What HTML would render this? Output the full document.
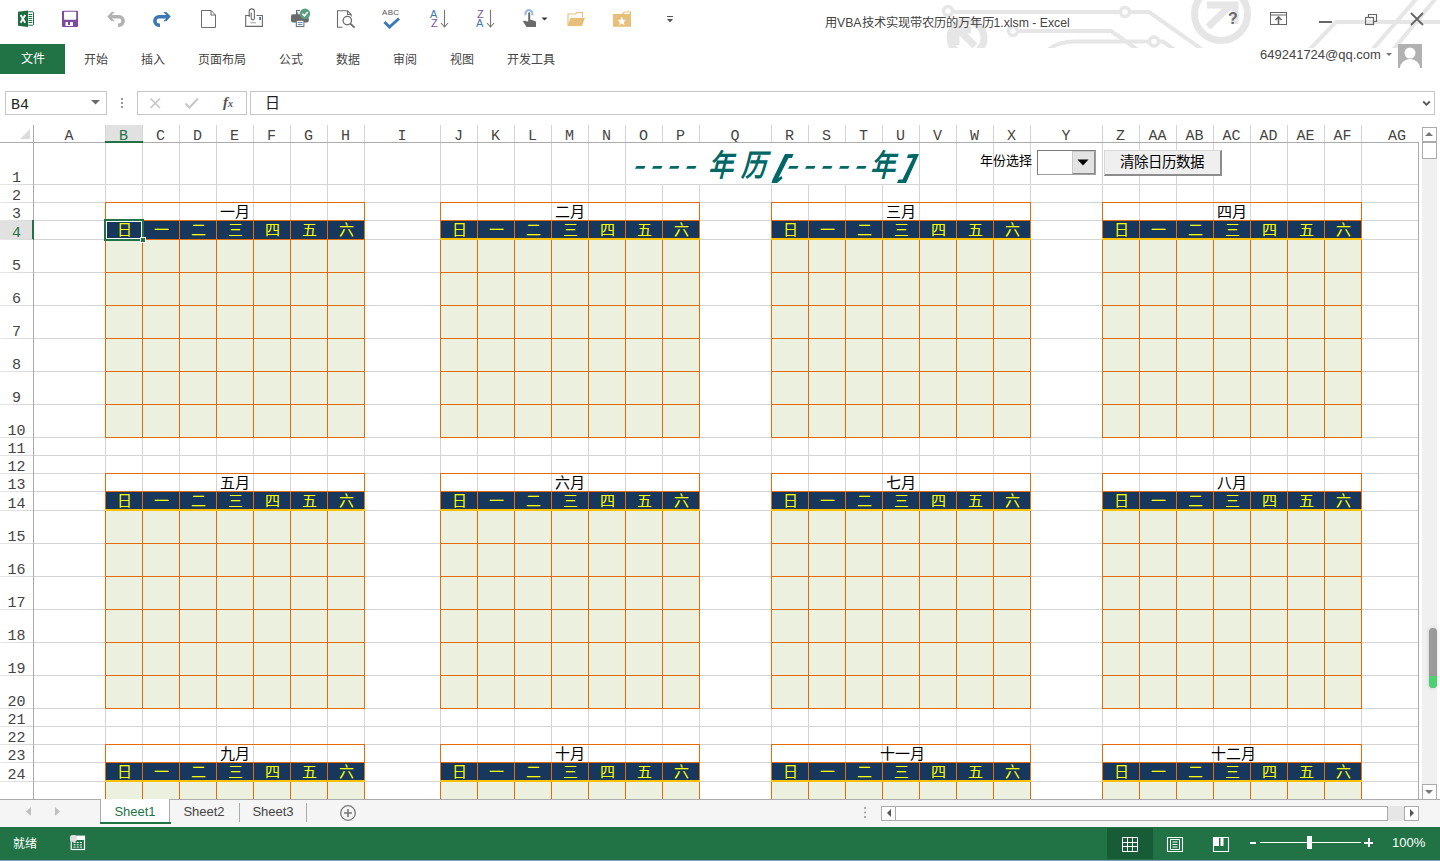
<!DOCTYPE html><html lang="zh-CN"><head><meta charset="utf-8"><title>Excel</title><style>
html,body{margin:0;padding:0;width:1440px;height:861px;overflow:hidden;background:#fff;position:relative;font-family:'Liberation Sans', sans-serif;}
div{box-sizing:border-box;}
</style></head><body>
<div style="position:absolute;left:105px;top:142px;width:1px;height:657px;background:#d4d4d4"></div>
<div style="position:absolute;left:142px;top:142px;width:1px;height:657px;background:#d4d4d4"></div>
<div style="position:absolute;left:179px;top:142px;width:1px;height:657px;background:#d4d4d4"></div>
<div style="position:absolute;left:216px;top:142px;width:1px;height:657px;background:#d4d4d4"></div>
<div style="position:absolute;left:253px;top:142px;width:1px;height:657px;background:#d4d4d4"></div>
<div style="position:absolute;left:290px;top:142px;width:1px;height:657px;background:#d4d4d4"></div>
<div style="position:absolute;left:327px;top:142px;width:1px;height:657px;background:#d4d4d4"></div>
<div style="position:absolute;left:364px;top:142px;width:1px;height:657px;background:#d4d4d4"></div>
<div style="position:absolute;left:440px;top:142px;width:1px;height:657px;background:#d4d4d4"></div>
<div style="position:absolute;left:477px;top:142px;width:1px;height:657px;background:#d4d4d4"></div>
<div style="position:absolute;left:514px;top:142px;width:1px;height:657px;background:#d4d4d4"></div>
<div style="position:absolute;left:551px;top:142px;width:1px;height:657px;background:#d4d4d4"></div>
<div style="position:absolute;left:588px;top:142px;width:1px;height:657px;background:#d4d4d4"></div>
<div style="position:absolute;left:625px;top:142px;width:1px;height:657px;background:#d4d4d4"></div>
<div style="position:absolute;left:662px;top:142px;width:1px;height:657px;background:#d4d4d4"></div>
<div style="position:absolute;left:699px;top:142px;width:1px;height:657px;background:#d4d4d4"></div>
<div style="position:absolute;left:771px;top:142px;width:1px;height:657px;background:#d4d4d4"></div>
<div style="position:absolute;left:808px;top:142px;width:1px;height:657px;background:#d4d4d4"></div>
<div style="position:absolute;left:845px;top:142px;width:1px;height:657px;background:#d4d4d4"></div>
<div style="position:absolute;left:882px;top:142px;width:1px;height:657px;background:#d4d4d4"></div>
<div style="position:absolute;left:919px;top:142px;width:1px;height:657px;background:#d4d4d4"></div>
<div style="position:absolute;left:956px;top:142px;width:1px;height:657px;background:#d4d4d4"></div>
<div style="position:absolute;left:993px;top:142px;width:1px;height:657px;background:#d4d4d4"></div>
<div style="position:absolute;left:1030px;top:142px;width:1px;height:657px;background:#d4d4d4"></div>
<div style="position:absolute;left:1102px;top:142px;width:1px;height:657px;background:#d4d4d4"></div>
<div style="position:absolute;left:1139px;top:142px;width:1px;height:657px;background:#d4d4d4"></div>
<div style="position:absolute;left:1176px;top:142px;width:1px;height:657px;background:#d4d4d4"></div>
<div style="position:absolute;left:1213px;top:142px;width:1px;height:657px;background:#d4d4d4"></div>
<div style="position:absolute;left:1250px;top:142px;width:1px;height:657px;background:#d4d4d4"></div>
<div style="position:absolute;left:1287px;top:142px;width:1px;height:657px;background:#d4d4d4"></div>
<div style="position:absolute;left:1324px;top:142px;width:1px;height:657px;background:#d4d4d4"></div>
<div style="position:absolute;left:1361px;top:142px;width:1px;height:657px;background:#d4d4d4"></div>
<div style="position:absolute;left:33px;top:184px;width:1385px;height:1px;background:#d4d4d4"></div>
<div style="position:absolute;left:33px;top:202px;width:1385px;height:1px;background:#d4d4d4"></div>
<div style="position:absolute;left:33px;top:220px;width:1385px;height:1px;background:#d4d4d4"></div>
<div style="position:absolute;left:33px;top:239px;width:1385px;height:1px;background:#d4d4d4"></div>
<div style="position:absolute;left:33px;top:272px;width:1385px;height:1px;background:#d4d4d4"></div>
<div style="position:absolute;left:33px;top:305px;width:1385px;height:1px;background:#d4d4d4"></div>
<div style="position:absolute;left:33px;top:338px;width:1385px;height:1px;background:#d4d4d4"></div>
<div style="position:absolute;left:33px;top:371px;width:1385px;height:1px;background:#d4d4d4"></div>
<div style="position:absolute;left:33px;top:404px;width:1385px;height:1px;background:#d4d4d4"></div>
<div style="position:absolute;left:33px;top:437px;width:1385px;height:1px;background:#d4d4d4"></div>
<div style="position:absolute;left:33px;top:455px;width:1385px;height:1px;background:#d4d4d4"></div>
<div style="position:absolute;left:33px;top:473px;width:1385px;height:1px;background:#d4d4d4"></div>
<div style="position:absolute;left:33px;top:491px;width:1385px;height:1px;background:#d4d4d4"></div>
<div style="position:absolute;left:33px;top:510px;width:1385px;height:1px;background:#d4d4d4"></div>
<div style="position:absolute;left:33px;top:543px;width:1385px;height:1px;background:#d4d4d4"></div>
<div style="position:absolute;left:33px;top:576px;width:1385px;height:1px;background:#d4d4d4"></div>
<div style="position:absolute;left:33px;top:609px;width:1385px;height:1px;background:#d4d4d4"></div>
<div style="position:absolute;left:33px;top:642px;width:1385px;height:1px;background:#d4d4d4"></div>
<div style="position:absolute;left:33px;top:675px;width:1385px;height:1px;background:#d4d4d4"></div>
<div style="position:absolute;left:33px;top:708px;width:1385px;height:1px;background:#d4d4d4"></div>
<div style="position:absolute;left:33px;top:726px;width:1385px;height:1px;background:#d4d4d4"></div>
<div style="position:absolute;left:33px;top:744px;width:1385px;height:1px;background:#d4d4d4"></div>
<div style="position:absolute;left:33px;top:762px;width:1385px;height:1px;background:#d4d4d4"></div>
<div style="position:absolute;left:33px;top:781px;width:1385px;height:1px;background:#d4d4d4"></div>
<div style="position:absolute;left:626px;top:143px;width:293px;height:41px;background:#fff"></div>
<div style="position:absolute;left:105px;top:239px;width:259px;height:198px;background:#ebf1de"></div>
<div style="position:absolute;left:105px;top:220px;width:259px;height:19px;background:#17375d"></div>
<div style="position:absolute;left:105px;top:220px;width:1px;height:217px;background:#e26b0a"></div>
<div style="position:absolute;left:142px;top:220px;width:1px;height:217px;background:#e26b0a"></div>
<div style="position:absolute;left:179px;top:220px;width:1px;height:217px;background:#e26b0a"></div>
<div style="position:absolute;left:216px;top:220px;width:1px;height:217px;background:#e26b0a"></div>
<div style="position:absolute;left:253px;top:220px;width:1px;height:217px;background:#e26b0a"></div>
<div style="position:absolute;left:290px;top:220px;width:1px;height:217px;background:#e26b0a"></div>
<div style="position:absolute;left:327px;top:220px;width:1px;height:217px;background:#e26b0a"></div>
<div style="position:absolute;left:364px;top:220px;width:1px;height:217px;background:#e26b0a"></div>
<div style="position:absolute;left:105px;top:202px;width:1px;height:18px;background:#e26b0a"></div>
<div style="position:absolute;left:364px;top:202px;width:1px;height:18px;background:#e26b0a"></div>
<div style="position:absolute;left:105px;top:202px;width:260px;height:1px;background:#e26b0a"></div>
<div style="position:absolute;left:105px;top:220px;width:260px;height:1px;background:#e26b0a"></div>
<div style="position:absolute;left:105px;top:272px;width:260px;height:1px;background:#e26b0a"></div>
<div style="position:absolute;left:105px;top:305px;width:260px;height:1px;background:#e26b0a"></div>
<div style="position:absolute;left:105px;top:338px;width:260px;height:1px;background:#e26b0a"></div>
<div style="position:absolute;left:105px;top:371px;width:260px;height:1px;background:#e26b0a"></div>
<div style="position:absolute;left:105px;top:404px;width:260px;height:1px;background:#e26b0a"></div>
<div style="position:absolute;left:105px;top:437px;width:260px;height:1px;background:#e26b0a"></div>
<div style="position:absolute;left:105px;top:239px;width:260px;height:1px;background:#e26b0a"></div>
<div style="position:absolute;left:105px;top:203px;white-space:nowrap;width:259px;text-align:center;font-size:15px;line-height:18px;color:#000;font-weight:300">一月</div>
<div style="position:absolute;left:106px;top:221px;white-space:nowrap;width:36px;text-align:center;font-size:15px;line-height:18px;color:#ff0;font-weight:300">日</div>
<div style="position:absolute;left:143px;top:221px;white-space:nowrap;width:36px;text-align:center;font-size:15px;line-height:18px;color:#ff0;font-weight:300">一</div>
<div style="position:absolute;left:180px;top:221px;white-space:nowrap;width:36px;text-align:center;font-size:15px;line-height:18px;color:#ff0;font-weight:300">二</div>
<div style="position:absolute;left:217px;top:221px;white-space:nowrap;width:36px;text-align:center;font-size:15px;line-height:18px;color:#ff0;font-weight:300">三</div>
<div style="position:absolute;left:254px;top:221px;white-space:nowrap;width:36px;text-align:center;font-size:15px;line-height:18px;color:#ff0;font-weight:300">四</div>
<div style="position:absolute;left:291px;top:221px;white-space:nowrap;width:36px;text-align:center;font-size:15px;line-height:18px;color:#ff0;font-weight:300">五</div>
<div style="position:absolute;left:328px;top:221px;white-space:nowrap;width:36px;text-align:center;font-size:15px;line-height:18px;color:#ff0;font-weight:300">六</div>
<div style="position:absolute;left:440px;top:239px;width:259px;height:198px;background:#ebf1de"></div>
<div style="position:absolute;left:440px;top:220px;width:259px;height:19px;background:#17375d"></div>
<div style="position:absolute;left:440px;top:220px;width:1px;height:217px;background:#e26b0a"></div>
<div style="position:absolute;left:477px;top:220px;width:1px;height:217px;background:#e26b0a"></div>
<div style="position:absolute;left:514px;top:220px;width:1px;height:217px;background:#e26b0a"></div>
<div style="position:absolute;left:551px;top:220px;width:1px;height:217px;background:#e26b0a"></div>
<div style="position:absolute;left:588px;top:220px;width:1px;height:217px;background:#e26b0a"></div>
<div style="position:absolute;left:625px;top:220px;width:1px;height:217px;background:#e26b0a"></div>
<div style="position:absolute;left:662px;top:220px;width:1px;height:217px;background:#e26b0a"></div>
<div style="position:absolute;left:699px;top:220px;width:1px;height:217px;background:#e26b0a"></div>
<div style="position:absolute;left:440px;top:202px;width:1px;height:18px;background:#e26b0a"></div>
<div style="position:absolute;left:699px;top:202px;width:1px;height:18px;background:#e26b0a"></div>
<div style="position:absolute;left:440px;top:202px;width:260px;height:1px;background:#e26b0a"></div>
<div style="position:absolute;left:440px;top:220px;width:260px;height:1px;background:#e26b0a"></div>
<div style="position:absolute;left:440px;top:272px;width:260px;height:1px;background:#e26b0a"></div>
<div style="position:absolute;left:440px;top:305px;width:260px;height:1px;background:#e26b0a"></div>
<div style="position:absolute;left:440px;top:338px;width:260px;height:1px;background:#e26b0a"></div>
<div style="position:absolute;left:440px;top:371px;width:260px;height:1px;background:#e26b0a"></div>
<div style="position:absolute;left:440px;top:404px;width:260px;height:1px;background:#e26b0a"></div>
<div style="position:absolute;left:440px;top:437px;width:260px;height:1px;background:#e26b0a"></div>
<div style="position:absolute;left:440px;top:238px;width:260px;height:2px;background:#ffc000"></div>
<div style="position:absolute;left:440px;top:203px;white-space:nowrap;width:259px;text-align:center;font-size:15px;line-height:18px;color:#000;font-weight:300">二月</div>
<div style="position:absolute;left:441px;top:221px;white-space:nowrap;width:36px;text-align:center;font-size:15px;line-height:18px;color:#ff0;font-weight:300">日</div>
<div style="position:absolute;left:478px;top:221px;white-space:nowrap;width:36px;text-align:center;font-size:15px;line-height:18px;color:#ff0;font-weight:300">一</div>
<div style="position:absolute;left:515px;top:221px;white-space:nowrap;width:36px;text-align:center;font-size:15px;line-height:18px;color:#ff0;font-weight:300">二</div>
<div style="position:absolute;left:552px;top:221px;white-space:nowrap;width:36px;text-align:center;font-size:15px;line-height:18px;color:#ff0;font-weight:300">三</div>
<div style="position:absolute;left:589px;top:221px;white-space:nowrap;width:36px;text-align:center;font-size:15px;line-height:18px;color:#ff0;font-weight:300">四</div>
<div style="position:absolute;left:626px;top:221px;white-space:nowrap;width:36px;text-align:center;font-size:15px;line-height:18px;color:#ff0;font-weight:300">五</div>
<div style="position:absolute;left:663px;top:221px;white-space:nowrap;width:36px;text-align:center;font-size:15px;line-height:18px;color:#ff0;font-weight:300">六</div>
<div style="position:absolute;left:771px;top:239px;width:259px;height:198px;background:#ebf1de"></div>
<div style="position:absolute;left:771px;top:220px;width:259px;height:19px;background:#17375d"></div>
<div style="position:absolute;left:771px;top:220px;width:1px;height:217px;background:#e26b0a"></div>
<div style="position:absolute;left:808px;top:220px;width:1px;height:217px;background:#e26b0a"></div>
<div style="position:absolute;left:845px;top:220px;width:1px;height:217px;background:#e26b0a"></div>
<div style="position:absolute;left:882px;top:220px;width:1px;height:217px;background:#e26b0a"></div>
<div style="position:absolute;left:919px;top:220px;width:1px;height:217px;background:#e26b0a"></div>
<div style="position:absolute;left:956px;top:220px;width:1px;height:217px;background:#e26b0a"></div>
<div style="position:absolute;left:993px;top:220px;width:1px;height:217px;background:#e26b0a"></div>
<div style="position:absolute;left:1030px;top:220px;width:1px;height:217px;background:#e26b0a"></div>
<div style="position:absolute;left:771px;top:202px;width:1px;height:18px;background:#e26b0a"></div>
<div style="position:absolute;left:1030px;top:202px;width:1px;height:18px;background:#e26b0a"></div>
<div style="position:absolute;left:771px;top:202px;width:260px;height:1px;background:#e26b0a"></div>
<div style="position:absolute;left:771px;top:220px;width:260px;height:1px;background:#e26b0a"></div>
<div style="position:absolute;left:771px;top:272px;width:260px;height:1px;background:#e26b0a"></div>
<div style="position:absolute;left:771px;top:305px;width:260px;height:1px;background:#e26b0a"></div>
<div style="position:absolute;left:771px;top:338px;width:260px;height:1px;background:#e26b0a"></div>
<div style="position:absolute;left:771px;top:371px;width:260px;height:1px;background:#e26b0a"></div>
<div style="position:absolute;left:771px;top:404px;width:260px;height:1px;background:#e26b0a"></div>
<div style="position:absolute;left:771px;top:437px;width:260px;height:1px;background:#e26b0a"></div>
<div style="position:absolute;left:771px;top:238px;width:260px;height:2px;background:#ffc000"></div>
<div style="position:absolute;left:771px;top:203px;white-space:nowrap;width:259px;text-align:center;font-size:15px;line-height:18px;color:#000;font-weight:300">三月</div>
<div style="position:absolute;left:772px;top:221px;white-space:nowrap;width:36px;text-align:center;font-size:15px;line-height:18px;color:#ff0;font-weight:300">日</div>
<div style="position:absolute;left:809px;top:221px;white-space:nowrap;width:36px;text-align:center;font-size:15px;line-height:18px;color:#ff0;font-weight:300">一</div>
<div style="position:absolute;left:846px;top:221px;white-space:nowrap;width:36px;text-align:center;font-size:15px;line-height:18px;color:#ff0;font-weight:300">二</div>
<div style="position:absolute;left:883px;top:221px;white-space:nowrap;width:36px;text-align:center;font-size:15px;line-height:18px;color:#ff0;font-weight:300">三</div>
<div style="position:absolute;left:920px;top:221px;white-space:nowrap;width:36px;text-align:center;font-size:15px;line-height:18px;color:#ff0;font-weight:300">四</div>
<div style="position:absolute;left:957px;top:221px;white-space:nowrap;width:36px;text-align:center;font-size:15px;line-height:18px;color:#ff0;font-weight:300">五</div>
<div style="position:absolute;left:994px;top:221px;white-space:nowrap;width:36px;text-align:center;font-size:15px;line-height:18px;color:#ff0;font-weight:300">六</div>
<div style="position:absolute;left:1102px;top:239px;width:259px;height:198px;background:#ebf1de"></div>
<div style="position:absolute;left:1102px;top:220px;width:259px;height:19px;background:#17375d"></div>
<div style="position:absolute;left:1102px;top:220px;width:1px;height:217px;background:#e26b0a"></div>
<div style="position:absolute;left:1139px;top:220px;width:1px;height:217px;background:#e26b0a"></div>
<div style="position:absolute;left:1176px;top:220px;width:1px;height:217px;background:#e26b0a"></div>
<div style="position:absolute;left:1213px;top:220px;width:1px;height:217px;background:#e26b0a"></div>
<div style="position:absolute;left:1250px;top:220px;width:1px;height:217px;background:#e26b0a"></div>
<div style="position:absolute;left:1287px;top:220px;width:1px;height:217px;background:#e26b0a"></div>
<div style="position:absolute;left:1324px;top:220px;width:1px;height:217px;background:#e26b0a"></div>
<div style="position:absolute;left:1361px;top:220px;width:1px;height:217px;background:#e26b0a"></div>
<div style="position:absolute;left:1102px;top:202px;width:1px;height:18px;background:#e26b0a"></div>
<div style="position:absolute;left:1361px;top:202px;width:1px;height:18px;background:#e26b0a"></div>
<div style="position:absolute;left:1102px;top:202px;width:260px;height:1px;background:#e26b0a"></div>
<div style="position:absolute;left:1102px;top:220px;width:260px;height:1px;background:#e26b0a"></div>
<div style="position:absolute;left:1102px;top:272px;width:260px;height:1px;background:#e26b0a"></div>
<div style="position:absolute;left:1102px;top:305px;width:260px;height:1px;background:#e26b0a"></div>
<div style="position:absolute;left:1102px;top:338px;width:260px;height:1px;background:#e26b0a"></div>
<div style="position:absolute;left:1102px;top:371px;width:260px;height:1px;background:#e26b0a"></div>
<div style="position:absolute;left:1102px;top:404px;width:260px;height:1px;background:#e26b0a"></div>
<div style="position:absolute;left:1102px;top:437px;width:260px;height:1px;background:#e26b0a"></div>
<div style="position:absolute;left:1102px;top:238px;width:260px;height:2px;background:#ffc000"></div>
<div style="position:absolute;left:1102px;top:203px;white-space:nowrap;width:259px;text-align:center;font-size:15px;line-height:18px;color:#000;font-weight:300">四月</div>
<div style="position:absolute;left:1103px;top:221px;white-space:nowrap;width:36px;text-align:center;font-size:15px;line-height:18px;color:#ff0;font-weight:300">日</div>
<div style="position:absolute;left:1140px;top:221px;white-space:nowrap;width:36px;text-align:center;font-size:15px;line-height:18px;color:#ff0;font-weight:300">一</div>
<div style="position:absolute;left:1177px;top:221px;white-space:nowrap;width:36px;text-align:center;font-size:15px;line-height:18px;color:#ff0;font-weight:300">二</div>
<div style="position:absolute;left:1214px;top:221px;white-space:nowrap;width:36px;text-align:center;font-size:15px;line-height:18px;color:#ff0;font-weight:300">三</div>
<div style="position:absolute;left:1251px;top:221px;white-space:nowrap;width:36px;text-align:center;font-size:15px;line-height:18px;color:#ff0;font-weight:300">四</div>
<div style="position:absolute;left:1288px;top:221px;white-space:nowrap;width:36px;text-align:center;font-size:15px;line-height:18px;color:#ff0;font-weight:300">五</div>
<div style="position:absolute;left:1325px;top:221px;white-space:nowrap;width:36px;text-align:center;font-size:15px;line-height:18px;color:#ff0;font-weight:300">六</div>
<div style="position:absolute;left:105px;top:510px;width:259px;height:198px;background:#ebf1de"></div>
<div style="position:absolute;left:105px;top:491px;width:259px;height:19px;background:#17375d"></div>
<div style="position:absolute;left:105px;top:491px;width:1px;height:217px;background:#e26b0a"></div>
<div style="position:absolute;left:142px;top:491px;width:1px;height:217px;background:#e26b0a"></div>
<div style="position:absolute;left:179px;top:491px;width:1px;height:217px;background:#e26b0a"></div>
<div style="position:absolute;left:216px;top:491px;width:1px;height:217px;background:#e26b0a"></div>
<div style="position:absolute;left:253px;top:491px;width:1px;height:217px;background:#e26b0a"></div>
<div style="position:absolute;left:290px;top:491px;width:1px;height:217px;background:#e26b0a"></div>
<div style="position:absolute;left:327px;top:491px;width:1px;height:217px;background:#e26b0a"></div>
<div style="position:absolute;left:364px;top:491px;width:1px;height:217px;background:#e26b0a"></div>
<div style="position:absolute;left:105px;top:473px;width:1px;height:18px;background:#e26b0a"></div>
<div style="position:absolute;left:364px;top:473px;width:1px;height:18px;background:#e26b0a"></div>
<div style="position:absolute;left:105px;top:473px;width:260px;height:1px;background:#e26b0a"></div>
<div style="position:absolute;left:105px;top:491px;width:260px;height:1px;background:#e26b0a"></div>
<div style="position:absolute;left:105px;top:543px;width:260px;height:1px;background:#e26b0a"></div>
<div style="position:absolute;left:105px;top:576px;width:260px;height:1px;background:#e26b0a"></div>
<div style="position:absolute;left:105px;top:609px;width:260px;height:1px;background:#e26b0a"></div>
<div style="position:absolute;left:105px;top:642px;width:260px;height:1px;background:#e26b0a"></div>
<div style="position:absolute;left:105px;top:675px;width:260px;height:1px;background:#e26b0a"></div>
<div style="position:absolute;left:105px;top:708px;width:260px;height:1px;background:#e26b0a"></div>
<div style="position:absolute;left:105px;top:509px;width:260px;height:2px;background:#ffc000"></div>
<div style="position:absolute;left:105px;top:474px;white-space:nowrap;width:259px;text-align:center;font-size:15px;line-height:18px;color:#000;font-weight:300">五月</div>
<div style="position:absolute;left:106px;top:492px;white-space:nowrap;width:36px;text-align:center;font-size:15px;line-height:18px;color:#ff0;font-weight:300">日</div>
<div style="position:absolute;left:143px;top:492px;white-space:nowrap;width:36px;text-align:center;font-size:15px;line-height:18px;color:#ff0;font-weight:300">一</div>
<div style="position:absolute;left:180px;top:492px;white-space:nowrap;width:36px;text-align:center;font-size:15px;line-height:18px;color:#ff0;font-weight:300">二</div>
<div style="position:absolute;left:217px;top:492px;white-space:nowrap;width:36px;text-align:center;font-size:15px;line-height:18px;color:#ff0;font-weight:300">三</div>
<div style="position:absolute;left:254px;top:492px;white-space:nowrap;width:36px;text-align:center;font-size:15px;line-height:18px;color:#ff0;font-weight:300">四</div>
<div style="position:absolute;left:291px;top:492px;white-space:nowrap;width:36px;text-align:center;font-size:15px;line-height:18px;color:#ff0;font-weight:300">五</div>
<div style="position:absolute;left:328px;top:492px;white-space:nowrap;width:36px;text-align:center;font-size:15px;line-height:18px;color:#ff0;font-weight:300">六</div>
<div style="position:absolute;left:440px;top:510px;width:259px;height:198px;background:#ebf1de"></div>
<div style="position:absolute;left:440px;top:491px;width:259px;height:19px;background:#17375d"></div>
<div style="position:absolute;left:440px;top:491px;width:1px;height:217px;background:#e26b0a"></div>
<div style="position:absolute;left:477px;top:491px;width:1px;height:217px;background:#e26b0a"></div>
<div style="position:absolute;left:514px;top:491px;width:1px;height:217px;background:#e26b0a"></div>
<div style="position:absolute;left:551px;top:491px;width:1px;height:217px;background:#e26b0a"></div>
<div style="position:absolute;left:588px;top:491px;width:1px;height:217px;background:#e26b0a"></div>
<div style="position:absolute;left:625px;top:491px;width:1px;height:217px;background:#e26b0a"></div>
<div style="position:absolute;left:662px;top:491px;width:1px;height:217px;background:#e26b0a"></div>
<div style="position:absolute;left:699px;top:491px;width:1px;height:217px;background:#e26b0a"></div>
<div style="position:absolute;left:440px;top:473px;width:1px;height:18px;background:#e26b0a"></div>
<div style="position:absolute;left:699px;top:473px;width:1px;height:18px;background:#e26b0a"></div>
<div style="position:absolute;left:440px;top:473px;width:260px;height:1px;background:#e26b0a"></div>
<div style="position:absolute;left:440px;top:491px;width:260px;height:1px;background:#e26b0a"></div>
<div style="position:absolute;left:440px;top:543px;width:260px;height:1px;background:#e26b0a"></div>
<div style="position:absolute;left:440px;top:576px;width:260px;height:1px;background:#e26b0a"></div>
<div style="position:absolute;left:440px;top:609px;width:260px;height:1px;background:#e26b0a"></div>
<div style="position:absolute;left:440px;top:642px;width:260px;height:1px;background:#e26b0a"></div>
<div style="position:absolute;left:440px;top:675px;width:260px;height:1px;background:#e26b0a"></div>
<div style="position:absolute;left:440px;top:708px;width:260px;height:1px;background:#e26b0a"></div>
<div style="position:absolute;left:440px;top:509px;width:260px;height:2px;background:#ffc000"></div>
<div style="position:absolute;left:440px;top:474px;white-space:nowrap;width:259px;text-align:center;font-size:15px;line-height:18px;color:#000;font-weight:300">六月</div>
<div style="position:absolute;left:441px;top:492px;white-space:nowrap;width:36px;text-align:center;font-size:15px;line-height:18px;color:#ff0;font-weight:300">日</div>
<div style="position:absolute;left:478px;top:492px;white-space:nowrap;width:36px;text-align:center;font-size:15px;line-height:18px;color:#ff0;font-weight:300">一</div>
<div style="position:absolute;left:515px;top:492px;white-space:nowrap;width:36px;text-align:center;font-size:15px;line-height:18px;color:#ff0;font-weight:300">二</div>
<div style="position:absolute;left:552px;top:492px;white-space:nowrap;width:36px;text-align:center;font-size:15px;line-height:18px;color:#ff0;font-weight:300">三</div>
<div style="position:absolute;left:589px;top:492px;white-space:nowrap;width:36px;text-align:center;font-size:15px;line-height:18px;color:#ff0;font-weight:300">四</div>
<div style="position:absolute;left:626px;top:492px;white-space:nowrap;width:36px;text-align:center;font-size:15px;line-height:18px;color:#ff0;font-weight:300">五</div>
<div style="position:absolute;left:663px;top:492px;white-space:nowrap;width:36px;text-align:center;font-size:15px;line-height:18px;color:#ff0;font-weight:300">六</div>
<div style="position:absolute;left:771px;top:510px;width:259px;height:198px;background:#ebf1de"></div>
<div style="position:absolute;left:771px;top:491px;width:259px;height:19px;background:#17375d"></div>
<div style="position:absolute;left:771px;top:491px;width:1px;height:217px;background:#e26b0a"></div>
<div style="position:absolute;left:808px;top:491px;width:1px;height:217px;background:#e26b0a"></div>
<div style="position:absolute;left:845px;top:491px;width:1px;height:217px;background:#e26b0a"></div>
<div style="position:absolute;left:882px;top:491px;width:1px;height:217px;background:#e26b0a"></div>
<div style="position:absolute;left:919px;top:491px;width:1px;height:217px;background:#e26b0a"></div>
<div style="position:absolute;left:956px;top:491px;width:1px;height:217px;background:#e26b0a"></div>
<div style="position:absolute;left:993px;top:491px;width:1px;height:217px;background:#e26b0a"></div>
<div style="position:absolute;left:1030px;top:491px;width:1px;height:217px;background:#e26b0a"></div>
<div style="position:absolute;left:771px;top:473px;width:1px;height:18px;background:#e26b0a"></div>
<div style="position:absolute;left:1030px;top:473px;width:1px;height:18px;background:#e26b0a"></div>
<div style="position:absolute;left:771px;top:473px;width:260px;height:1px;background:#e26b0a"></div>
<div style="position:absolute;left:771px;top:491px;width:260px;height:1px;background:#e26b0a"></div>
<div style="position:absolute;left:771px;top:543px;width:260px;height:1px;background:#e26b0a"></div>
<div style="position:absolute;left:771px;top:576px;width:260px;height:1px;background:#e26b0a"></div>
<div style="position:absolute;left:771px;top:609px;width:260px;height:1px;background:#e26b0a"></div>
<div style="position:absolute;left:771px;top:642px;width:260px;height:1px;background:#e26b0a"></div>
<div style="position:absolute;left:771px;top:675px;width:260px;height:1px;background:#e26b0a"></div>
<div style="position:absolute;left:771px;top:708px;width:260px;height:1px;background:#e26b0a"></div>
<div style="position:absolute;left:771px;top:509px;width:260px;height:2px;background:#ffc000"></div>
<div style="position:absolute;left:771px;top:474px;white-space:nowrap;width:259px;text-align:center;font-size:15px;line-height:18px;color:#000;font-weight:300">七月</div>
<div style="position:absolute;left:772px;top:492px;white-space:nowrap;width:36px;text-align:center;font-size:15px;line-height:18px;color:#ff0;font-weight:300">日</div>
<div style="position:absolute;left:809px;top:492px;white-space:nowrap;width:36px;text-align:center;font-size:15px;line-height:18px;color:#ff0;font-weight:300">一</div>
<div style="position:absolute;left:846px;top:492px;white-space:nowrap;width:36px;text-align:center;font-size:15px;line-height:18px;color:#ff0;font-weight:300">二</div>
<div style="position:absolute;left:883px;top:492px;white-space:nowrap;width:36px;text-align:center;font-size:15px;line-height:18px;color:#ff0;font-weight:300">三</div>
<div style="position:absolute;left:920px;top:492px;white-space:nowrap;width:36px;text-align:center;font-size:15px;line-height:18px;color:#ff0;font-weight:300">四</div>
<div style="position:absolute;left:957px;top:492px;white-space:nowrap;width:36px;text-align:center;font-size:15px;line-height:18px;color:#ff0;font-weight:300">五</div>
<div style="position:absolute;left:994px;top:492px;white-space:nowrap;width:36px;text-align:center;font-size:15px;line-height:18px;color:#ff0;font-weight:300">六</div>
<div style="position:absolute;left:1102px;top:510px;width:259px;height:198px;background:#ebf1de"></div>
<div style="position:absolute;left:1102px;top:491px;width:259px;height:19px;background:#17375d"></div>
<div style="position:absolute;left:1102px;top:491px;width:1px;height:217px;background:#e26b0a"></div>
<div style="position:absolute;left:1139px;top:491px;width:1px;height:217px;background:#e26b0a"></div>
<div style="position:absolute;left:1176px;top:491px;width:1px;height:217px;background:#e26b0a"></div>
<div style="position:absolute;left:1213px;top:491px;width:1px;height:217px;background:#e26b0a"></div>
<div style="position:absolute;left:1250px;top:491px;width:1px;height:217px;background:#e26b0a"></div>
<div style="position:absolute;left:1287px;top:491px;width:1px;height:217px;background:#e26b0a"></div>
<div style="position:absolute;left:1324px;top:491px;width:1px;height:217px;background:#e26b0a"></div>
<div style="position:absolute;left:1361px;top:491px;width:1px;height:217px;background:#e26b0a"></div>
<div style="position:absolute;left:1102px;top:473px;width:1px;height:18px;background:#e26b0a"></div>
<div style="position:absolute;left:1361px;top:473px;width:1px;height:18px;background:#e26b0a"></div>
<div style="position:absolute;left:1102px;top:473px;width:260px;height:1px;background:#e26b0a"></div>
<div style="position:absolute;left:1102px;top:491px;width:260px;height:1px;background:#e26b0a"></div>
<div style="position:absolute;left:1102px;top:543px;width:260px;height:1px;background:#e26b0a"></div>
<div style="position:absolute;left:1102px;top:576px;width:260px;height:1px;background:#e26b0a"></div>
<div style="position:absolute;left:1102px;top:609px;width:260px;height:1px;background:#e26b0a"></div>
<div style="position:absolute;left:1102px;top:642px;width:260px;height:1px;background:#e26b0a"></div>
<div style="position:absolute;left:1102px;top:675px;width:260px;height:1px;background:#e26b0a"></div>
<div style="position:absolute;left:1102px;top:708px;width:260px;height:1px;background:#e26b0a"></div>
<div style="position:absolute;left:1102px;top:509px;width:260px;height:2px;background:#ffc000"></div>
<div style="position:absolute;left:1102px;top:474px;white-space:nowrap;width:259px;text-align:center;font-size:15px;line-height:18px;color:#000;font-weight:300">八月</div>
<div style="position:absolute;left:1103px;top:492px;white-space:nowrap;width:36px;text-align:center;font-size:15px;line-height:18px;color:#ff0;font-weight:300">日</div>
<div style="position:absolute;left:1140px;top:492px;white-space:nowrap;width:36px;text-align:center;font-size:15px;line-height:18px;color:#ff0;font-weight:300">一</div>
<div style="position:absolute;left:1177px;top:492px;white-space:nowrap;width:36px;text-align:center;font-size:15px;line-height:18px;color:#ff0;font-weight:300">二</div>
<div style="position:absolute;left:1214px;top:492px;white-space:nowrap;width:36px;text-align:center;font-size:15px;line-height:18px;color:#ff0;font-weight:300">三</div>
<div style="position:absolute;left:1251px;top:492px;white-space:nowrap;width:36px;text-align:center;font-size:15px;line-height:18px;color:#ff0;font-weight:300">四</div>
<div style="position:absolute;left:1288px;top:492px;white-space:nowrap;width:36px;text-align:center;font-size:15px;line-height:18px;color:#ff0;font-weight:300">五</div>
<div style="position:absolute;left:1325px;top:492px;white-space:nowrap;width:36px;text-align:center;font-size:15px;line-height:18px;color:#ff0;font-weight:300">六</div>
<div style="position:absolute;left:105px;top:781px;width:259px;height:18px;background:#ebf1de"></div>
<div style="position:absolute;left:105px;top:762px;width:259px;height:19px;background:#17375d"></div>
<div style="position:absolute;left:105px;top:762px;width:1px;height:37px;background:#e26b0a"></div>
<div style="position:absolute;left:142px;top:762px;width:1px;height:37px;background:#e26b0a"></div>
<div style="position:absolute;left:179px;top:762px;width:1px;height:37px;background:#e26b0a"></div>
<div style="position:absolute;left:216px;top:762px;width:1px;height:37px;background:#e26b0a"></div>
<div style="position:absolute;left:253px;top:762px;width:1px;height:37px;background:#e26b0a"></div>
<div style="position:absolute;left:290px;top:762px;width:1px;height:37px;background:#e26b0a"></div>
<div style="position:absolute;left:327px;top:762px;width:1px;height:37px;background:#e26b0a"></div>
<div style="position:absolute;left:364px;top:762px;width:1px;height:37px;background:#e26b0a"></div>
<div style="position:absolute;left:105px;top:744px;width:1px;height:18px;background:#e26b0a"></div>
<div style="position:absolute;left:364px;top:744px;width:1px;height:18px;background:#e26b0a"></div>
<div style="position:absolute;left:105px;top:744px;width:260px;height:1px;background:#e26b0a"></div>
<div style="position:absolute;left:105px;top:762px;width:260px;height:1px;background:#e26b0a"></div>
<div style="position:absolute;left:105px;top:780px;width:260px;height:2px;background:#ffc000"></div>
<div style="position:absolute;left:105px;top:745px;white-space:nowrap;width:259px;text-align:center;font-size:15px;line-height:18px;color:#000;font-weight:300">九月</div>
<div style="position:absolute;left:106px;top:763px;white-space:nowrap;width:36px;text-align:center;font-size:15px;line-height:18px;color:#ff0;font-weight:300">日</div>
<div style="position:absolute;left:143px;top:763px;white-space:nowrap;width:36px;text-align:center;font-size:15px;line-height:18px;color:#ff0;font-weight:300">一</div>
<div style="position:absolute;left:180px;top:763px;white-space:nowrap;width:36px;text-align:center;font-size:15px;line-height:18px;color:#ff0;font-weight:300">二</div>
<div style="position:absolute;left:217px;top:763px;white-space:nowrap;width:36px;text-align:center;font-size:15px;line-height:18px;color:#ff0;font-weight:300">三</div>
<div style="position:absolute;left:254px;top:763px;white-space:nowrap;width:36px;text-align:center;font-size:15px;line-height:18px;color:#ff0;font-weight:300">四</div>
<div style="position:absolute;left:291px;top:763px;white-space:nowrap;width:36px;text-align:center;font-size:15px;line-height:18px;color:#ff0;font-weight:300">五</div>
<div style="position:absolute;left:328px;top:763px;white-space:nowrap;width:36px;text-align:center;font-size:15px;line-height:18px;color:#ff0;font-weight:300">六</div>
<div style="position:absolute;left:440px;top:781px;width:259px;height:18px;background:#ebf1de"></div>
<div style="position:absolute;left:440px;top:762px;width:259px;height:19px;background:#17375d"></div>
<div style="position:absolute;left:440px;top:762px;width:1px;height:37px;background:#e26b0a"></div>
<div style="position:absolute;left:477px;top:762px;width:1px;height:37px;background:#e26b0a"></div>
<div style="position:absolute;left:514px;top:762px;width:1px;height:37px;background:#e26b0a"></div>
<div style="position:absolute;left:551px;top:762px;width:1px;height:37px;background:#e26b0a"></div>
<div style="position:absolute;left:588px;top:762px;width:1px;height:37px;background:#e26b0a"></div>
<div style="position:absolute;left:625px;top:762px;width:1px;height:37px;background:#e26b0a"></div>
<div style="position:absolute;left:662px;top:762px;width:1px;height:37px;background:#e26b0a"></div>
<div style="position:absolute;left:699px;top:762px;width:1px;height:37px;background:#e26b0a"></div>
<div style="position:absolute;left:440px;top:744px;width:1px;height:18px;background:#e26b0a"></div>
<div style="position:absolute;left:699px;top:744px;width:1px;height:18px;background:#e26b0a"></div>
<div style="position:absolute;left:440px;top:744px;width:260px;height:1px;background:#e26b0a"></div>
<div style="position:absolute;left:440px;top:762px;width:260px;height:1px;background:#e26b0a"></div>
<div style="position:absolute;left:440px;top:780px;width:260px;height:2px;background:#ffc000"></div>
<div style="position:absolute;left:440px;top:745px;white-space:nowrap;width:259px;text-align:center;font-size:15px;line-height:18px;color:#000;font-weight:300">十月</div>
<div style="position:absolute;left:441px;top:763px;white-space:nowrap;width:36px;text-align:center;font-size:15px;line-height:18px;color:#ff0;font-weight:300">日</div>
<div style="position:absolute;left:478px;top:763px;white-space:nowrap;width:36px;text-align:center;font-size:15px;line-height:18px;color:#ff0;font-weight:300">一</div>
<div style="position:absolute;left:515px;top:763px;white-space:nowrap;width:36px;text-align:center;font-size:15px;line-height:18px;color:#ff0;font-weight:300">二</div>
<div style="position:absolute;left:552px;top:763px;white-space:nowrap;width:36px;text-align:center;font-size:15px;line-height:18px;color:#ff0;font-weight:300">三</div>
<div style="position:absolute;left:589px;top:763px;white-space:nowrap;width:36px;text-align:center;font-size:15px;line-height:18px;color:#ff0;font-weight:300">四</div>
<div style="position:absolute;left:626px;top:763px;white-space:nowrap;width:36px;text-align:center;font-size:15px;line-height:18px;color:#ff0;font-weight:300">五</div>
<div style="position:absolute;left:663px;top:763px;white-space:nowrap;width:36px;text-align:center;font-size:15px;line-height:18px;color:#ff0;font-weight:300">六</div>
<div style="position:absolute;left:771px;top:781px;width:259px;height:18px;background:#ebf1de"></div>
<div style="position:absolute;left:771px;top:762px;width:259px;height:19px;background:#17375d"></div>
<div style="position:absolute;left:771px;top:762px;width:1px;height:37px;background:#e26b0a"></div>
<div style="position:absolute;left:808px;top:762px;width:1px;height:37px;background:#e26b0a"></div>
<div style="position:absolute;left:845px;top:762px;width:1px;height:37px;background:#e26b0a"></div>
<div style="position:absolute;left:882px;top:762px;width:1px;height:37px;background:#e26b0a"></div>
<div style="position:absolute;left:919px;top:762px;width:1px;height:37px;background:#e26b0a"></div>
<div style="position:absolute;left:956px;top:762px;width:1px;height:37px;background:#e26b0a"></div>
<div style="position:absolute;left:993px;top:762px;width:1px;height:37px;background:#e26b0a"></div>
<div style="position:absolute;left:1030px;top:762px;width:1px;height:37px;background:#e26b0a"></div>
<div style="position:absolute;left:771px;top:744px;width:1px;height:18px;background:#e26b0a"></div>
<div style="position:absolute;left:1030px;top:744px;width:1px;height:18px;background:#e26b0a"></div>
<div style="position:absolute;left:771px;top:744px;width:260px;height:1px;background:#e26b0a"></div>
<div style="position:absolute;left:771px;top:762px;width:260px;height:1px;background:#e26b0a"></div>
<div style="position:absolute;left:771px;top:780px;width:260px;height:2px;background:#ffc000"></div>
<div style="position:absolute;left:773px;top:745px;white-space:nowrap;width:259px;text-align:center;font-size:15px;line-height:18px;color:#000;font-weight:300">十一月</div>
<div style="position:absolute;left:772px;top:763px;white-space:nowrap;width:36px;text-align:center;font-size:15px;line-height:18px;color:#ff0;font-weight:300">日</div>
<div style="position:absolute;left:809px;top:763px;white-space:nowrap;width:36px;text-align:center;font-size:15px;line-height:18px;color:#ff0;font-weight:300">一</div>
<div style="position:absolute;left:846px;top:763px;white-space:nowrap;width:36px;text-align:center;font-size:15px;line-height:18px;color:#ff0;font-weight:300">二</div>
<div style="position:absolute;left:883px;top:763px;white-space:nowrap;width:36px;text-align:center;font-size:15px;line-height:18px;color:#ff0;font-weight:300">三</div>
<div style="position:absolute;left:920px;top:763px;white-space:nowrap;width:36px;text-align:center;font-size:15px;line-height:18px;color:#ff0;font-weight:300">四</div>
<div style="position:absolute;left:957px;top:763px;white-space:nowrap;width:36px;text-align:center;font-size:15px;line-height:18px;color:#ff0;font-weight:300">五</div>
<div style="position:absolute;left:994px;top:763px;white-space:nowrap;width:36px;text-align:center;font-size:15px;line-height:18px;color:#ff0;font-weight:300">六</div>
<div style="position:absolute;left:1102px;top:781px;width:259px;height:18px;background:#ebf1de"></div>
<div style="position:absolute;left:1102px;top:762px;width:259px;height:19px;background:#17375d"></div>
<div style="position:absolute;left:1102px;top:762px;width:1px;height:37px;background:#e26b0a"></div>
<div style="position:absolute;left:1139px;top:762px;width:1px;height:37px;background:#e26b0a"></div>
<div style="position:absolute;left:1176px;top:762px;width:1px;height:37px;background:#e26b0a"></div>
<div style="position:absolute;left:1213px;top:762px;width:1px;height:37px;background:#e26b0a"></div>
<div style="position:absolute;left:1250px;top:762px;width:1px;height:37px;background:#e26b0a"></div>
<div style="position:absolute;left:1287px;top:762px;width:1px;height:37px;background:#e26b0a"></div>
<div style="position:absolute;left:1324px;top:762px;width:1px;height:37px;background:#e26b0a"></div>
<div style="position:absolute;left:1361px;top:762px;width:1px;height:37px;background:#e26b0a"></div>
<div style="position:absolute;left:1102px;top:744px;width:1px;height:18px;background:#e26b0a"></div>
<div style="position:absolute;left:1361px;top:744px;width:1px;height:18px;background:#e26b0a"></div>
<div style="position:absolute;left:1102px;top:744px;width:260px;height:1px;background:#e26b0a"></div>
<div style="position:absolute;left:1102px;top:762px;width:260px;height:1px;background:#e26b0a"></div>
<div style="position:absolute;left:1102px;top:780px;width:260px;height:2px;background:#ffc000"></div>
<div style="position:absolute;left:1104px;top:745px;white-space:nowrap;width:259px;text-align:center;font-size:15px;line-height:18px;color:#000;font-weight:300">十二月</div>
<div style="position:absolute;left:1103px;top:763px;white-space:nowrap;width:36px;text-align:center;font-size:15px;line-height:18px;color:#ff0;font-weight:300">日</div>
<div style="position:absolute;left:1140px;top:763px;white-space:nowrap;width:36px;text-align:center;font-size:15px;line-height:18px;color:#ff0;font-weight:300">一</div>
<div style="position:absolute;left:1177px;top:763px;white-space:nowrap;width:36px;text-align:center;font-size:15px;line-height:18px;color:#ff0;font-weight:300">二</div>
<div style="position:absolute;left:1214px;top:763px;white-space:nowrap;width:36px;text-align:center;font-size:15px;line-height:18px;color:#ff0;font-weight:300">三</div>
<div style="position:absolute;left:1251px;top:763px;white-space:nowrap;width:36px;text-align:center;font-size:15px;line-height:18px;color:#ff0;font-weight:300">四</div>
<div style="position:absolute;left:1288px;top:763px;white-space:nowrap;width:36px;text-align:center;font-size:15px;line-height:18px;color:#ff0;font-weight:300">五</div>
<div style="position:absolute;left:1325px;top:763px;white-space:nowrap;width:36px;text-align:center;font-size:15px;line-height:18px;color:#ff0;font-weight:300">六</div>
<div style="position:absolute;left:0px;top:125px;width:1418px;height:17px;background:#fff"></div>
<div style="position:absolute;left:33px;top:128px;white-space:nowrap;width:72px;text-align:center;font-family:'Liberation Mono', monospace;font-size:15px;line-height:17px;color:#444">A</div>
<div style="position:absolute;left:105px;top:125px;width:37px;height:17px;background:#e1e1e1"></div>
<div style="position:absolute;left:105px;top:128px;white-space:nowrap;width:37px;text-align:center;font-family:'Liberation Mono', monospace;font-size:15px;line-height:17px;color:#217346">B</div>
<div style="position:absolute;left:142px;top:128px;white-space:nowrap;width:37px;text-align:center;font-family:'Liberation Mono', monospace;font-size:15px;line-height:17px;color:#444">C</div>
<div style="position:absolute;left:179px;top:128px;white-space:nowrap;width:37px;text-align:center;font-family:'Liberation Mono', monospace;font-size:15px;line-height:17px;color:#444">D</div>
<div style="position:absolute;left:216px;top:128px;white-space:nowrap;width:37px;text-align:center;font-family:'Liberation Mono', monospace;font-size:15px;line-height:17px;color:#444">E</div>
<div style="position:absolute;left:253px;top:128px;white-space:nowrap;width:37px;text-align:center;font-family:'Liberation Mono', monospace;font-size:15px;line-height:17px;color:#444">F</div>
<div style="position:absolute;left:290px;top:128px;white-space:nowrap;width:37px;text-align:center;font-family:'Liberation Mono', monospace;font-size:15px;line-height:17px;color:#444">G</div>
<div style="position:absolute;left:327px;top:128px;white-space:nowrap;width:37px;text-align:center;font-family:'Liberation Mono', monospace;font-size:15px;line-height:17px;color:#444">H</div>
<div style="position:absolute;left:364px;top:128px;white-space:nowrap;width:76px;text-align:center;font-family:'Liberation Mono', monospace;font-size:15px;line-height:17px;color:#444">I</div>
<div style="position:absolute;left:440px;top:128px;white-space:nowrap;width:37px;text-align:center;font-family:'Liberation Mono', monospace;font-size:15px;line-height:17px;color:#444">J</div>
<div style="position:absolute;left:477px;top:128px;white-space:nowrap;width:37px;text-align:center;font-family:'Liberation Mono', monospace;font-size:15px;line-height:17px;color:#444">K</div>
<div style="position:absolute;left:514px;top:128px;white-space:nowrap;width:37px;text-align:center;font-family:'Liberation Mono', monospace;font-size:15px;line-height:17px;color:#444">L</div>
<div style="position:absolute;left:551px;top:128px;white-space:nowrap;width:37px;text-align:center;font-family:'Liberation Mono', monospace;font-size:15px;line-height:17px;color:#444">M</div>
<div style="position:absolute;left:588px;top:128px;white-space:nowrap;width:37px;text-align:center;font-family:'Liberation Mono', monospace;font-size:15px;line-height:17px;color:#444">N</div>
<div style="position:absolute;left:625px;top:128px;white-space:nowrap;width:37px;text-align:center;font-family:'Liberation Mono', monospace;font-size:15px;line-height:17px;color:#444">O</div>
<div style="position:absolute;left:662px;top:128px;white-space:nowrap;width:37px;text-align:center;font-family:'Liberation Mono', monospace;font-size:15px;line-height:17px;color:#444">P</div>
<div style="position:absolute;left:699px;top:128px;white-space:nowrap;width:72px;text-align:center;font-family:'Liberation Mono', monospace;font-size:15px;line-height:17px;color:#444">Q</div>
<div style="position:absolute;left:771px;top:128px;white-space:nowrap;width:37px;text-align:center;font-family:'Liberation Mono', monospace;font-size:15px;line-height:17px;color:#444">R</div>
<div style="position:absolute;left:808px;top:128px;white-space:nowrap;width:37px;text-align:center;font-family:'Liberation Mono', monospace;font-size:15px;line-height:17px;color:#444">S</div>
<div style="position:absolute;left:845px;top:128px;white-space:nowrap;width:37px;text-align:center;font-family:'Liberation Mono', monospace;font-size:15px;line-height:17px;color:#444">T</div>
<div style="position:absolute;left:882px;top:128px;white-space:nowrap;width:37px;text-align:center;font-family:'Liberation Mono', monospace;font-size:15px;line-height:17px;color:#444">U</div>
<div style="position:absolute;left:919px;top:128px;white-space:nowrap;width:37px;text-align:center;font-family:'Liberation Mono', monospace;font-size:15px;line-height:17px;color:#444">V</div>
<div style="position:absolute;left:956px;top:128px;white-space:nowrap;width:37px;text-align:center;font-family:'Liberation Mono', monospace;font-size:15px;line-height:17px;color:#444">W</div>
<div style="position:absolute;left:993px;top:128px;white-space:nowrap;width:37px;text-align:center;font-family:'Liberation Mono', monospace;font-size:15px;line-height:17px;color:#444">X</div>
<div style="position:absolute;left:1030px;top:128px;white-space:nowrap;width:72px;text-align:center;font-family:'Liberation Mono', monospace;font-size:15px;line-height:17px;color:#444">Y</div>
<div style="position:absolute;left:1102px;top:128px;white-space:nowrap;width:37px;text-align:center;font-family:'Liberation Mono', monospace;font-size:15px;line-height:17px;color:#444">Z</div>
<div style="position:absolute;left:1139px;top:128px;white-space:nowrap;width:37px;text-align:center;font-family:'Liberation Mono', monospace;font-size:15px;line-height:17px;color:#444">AA</div>
<div style="position:absolute;left:1176px;top:128px;white-space:nowrap;width:37px;text-align:center;font-family:'Liberation Mono', monospace;font-size:15px;line-height:17px;color:#444">AB</div>
<div style="position:absolute;left:1213px;top:128px;white-space:nowrap;width:37px;text-align:center;font-family:'Liberation Mono', monospace;font-size:15px;line-height:17px;color:#444">AC</div>
<div style="position:absolute;left:1250px;top:128px;white-space:nowrap;width:37px;text-align:center;font-family:'Liberation Mono', monospace;font-size:15px;line-height:17px;color:#444">AD</div>
<div style="position:absolute;left:1287px;top:128px;white-space:nowrap;width:37px;text-align:center;font-family:'Liberation Mono', monospace;font-size:15px;line-height:17px;color:#444">AE</div>
<div style="position:absolute;left:1324px;top:128px;white-space:nowrap;width:37px;text-align:center;font-family:'Liberation Mono', monospace;font-size:15px;line-height:17px;color:#444">AF</div>
<div style="position:absolute;left:1361px;top:128px;white-space:nowrap;width:72px;text-align:center;font-family:'Liberation Mono', monospace;font-size:15px;line-height:17px;color:#444">AG</div>
<div style="position:absolute;left:105px;top:125px;width:1px;height:17px;background:#d4d4d4"></div>
<div style="position:absolute;left:142px;top:125px;width:1px;height:17px;background:#d4d4d4"></div>
<div style="position:absolute;left:179px;top:125px;width:1px;height:17px;background:#d4d4d4"></div>
<div style="position:absolute;left:216px;top:125px;width:1px;height:17px;background:#d4d4d4"></div>
<div style="position:absolute;left:253px;top:125px;width:1px;height:17px;background:#d4d4d4"></div>
<div style="position:absolute;left:290px;top:125px;width:1px;height:17px;background:#d4d4d4"></div>
<div style="position:absolute;left:327px;top:125px;width:1px;height:17px;background:#d4d4d4"></div>
<div style="position:absolute;left:364px;top:125px;width:1px;height:17px;background:#d4d4d4"></div>
<div style="position:absolute;left:440px;top:125px;width:1px;height:17px;background:#d4d4d4"></div>
<div style="position:absolute;left:477px;top:125px;width:1px;height:17px;background:#d4d4d4"></div>
<div style="position:absolute;left:514px;top:125px;width:1px;height:17px;background:#d4d4d4"></div>
<div style="position:absolute;left:551px;top:125px;width:1px;height:17px;background:#d4d4d4"></div>
<div style="position:absolute;left:588px;top:125px;width:1px;height:17px;background:#d4d4d4"></div>
<div style="position:absolute;left:625px;top:125px;width:1px;height:17px;background:#d4d4d4"></div>
<div style="position:absolute;left:662px;top:125px;width:1px;height:17px;background:#d4d4d4"></div>
<div style="position:absolute;left:699px;top:125px;width:1px;height:17px;background:#d4d4d4"></div>
<div style="position:absolute;left:771px;top:125px;width:1px;height:17px;background:#d4d4d4"></div>
<div style="position:absolute;left:808px;top:125px;width:1px;height:17px;background:#d4d4d4"></div>
<div style="position:absolute;left:845px;top:125px;width:1px;height:17px;background:#d4d4d4"></div>
<div style="position:absolute;left:882px;top:125px;width:1px;height:17px;background:#d4d4d4"></div>
<div style="position:absolute;left:919px;top:125px;width:1px;height:17px;background:#d4d4d4"></div>
<div style="position:absolute;left:956px;top:125px;width:1px;height:17px;background:#d4d4d4"></div>
<div style="position:absolute;left:993px;top:125px;width:1px;height:17px;background:#d4d4d4"></div>
<div style="position:absolute;left:1030px;top:125px;width:1px;height:17px;background:#d4d4d4"></div>
<div style="position:absolute;left:1102px;top:125px;width:1px;height:17px;background:#d4d4d4"></div>
<div style="position:absolute;left:1139px;top:125px;width:1px;height:17px;background:#d4d4d4"></div>
<div style="position:absolute;left:1176px;top:125px;width:1px;height:17px;background:#d4d4d4"></div>
<div style="position:absolute;left:1213px;top:125px;width:1px;height:17px;background:#d4d4d4"></div>
<div style="position:absolute;left:1250px;top:125px;width:1px;height:17px;background:#d4d4d4"></div>
<div style="position:absolute;left:1287px;top:125px;width:1px;height:17px;background:#d4d4d4"></div>
<div style="position:absolute;left:1324px;top:125px;width:1px;height:17px;background:#d4d4d4"></div>
<div style="position:absolute;left:1361px;top:125px;width:1px;height:17px;background:#d4d4d4"></div>
<div style="position:absolute;left:0px;top:142px;width:1418px;height:1px;background:#ababab"></div>
<div style="position:absolute;left:105px;top:141px;width:38px;height:2px;background:#217346"></div>
<svg style="position:absolute;left:19px;top:128px" width="12" height="12"><polygon points="11,1 11,11 1,11" fill="#dcdcdc"/></svg>
<div style="position:absolute;left:0px;top:143px;width:33px;height:656px;background:#fff"></div>
<div style="position:absolute;left:33px;top:125px;width:1px;height:674px;background:#ababab"></div>
<div style="position:absolute;left:0px;top:184px;width:33px;height:1px;background:linear-gradient(to right,#e8e8e8,#d6d6d6)"></div>
<div style="position:absolute;left:0px;top:170px;white-space:nowrap;width:33px;text-align:center;font-family:'Liberation Mono', monospace;font-size:15px;line-height:17px;color:#444">1</div>
<div style="position:absolute;left:0px;top:202px;width:33px;height:1px;background:linear-gradient(to right,#e8e8e8,#d6d6d6)"></div>
<div style="position:absolute;left:0px;top:188px;white-space:nowrap;width:33px;text-align:center;font-family:'Liberation Mono', monospace;font-size:15px;line-height:17px;color:#444">2</div>
<div style="position:absolute;left:0px;top:220px;width:33px;height:1px;background:linear-gradient(to right,#e8e8e8,#d6d6d6)"></div>
<div style="position:absolute;left:0px;top:206px;white-space:nowrap;width:33px;text-align:center;font-family:'Liberation Mono', monospace;font-size:15px;line-height:17px;color:#444">3</div>
<div style="position:absolute;left:0px;top:221px;width:33px;height:18px;background:#e1e1e1"></div>
<div style="position:absolute;left:32px;top:220px;width:2px;height:20px;background:#217346"></div>
<div style="position:absolute;left:0px;top:239px;width:33px;height:1px;background:linear-gradient(to right,#e8e8e8,#d6d6d6)"></div>
<div style="position:absolute;left:0px;top:225px;white-space:nowrap;width:33px;text-align:center;font-family:'Liberation Mono', monospace;font-size:15px;line-height:17px;color:#217346">4</div>
<div style="position:absolute;left:0px;top:272px;width:33px;height:1px;background:linear-gradient(to right,#e8e8e8,#d6d6d6)"></div>
<div style="position:absolute;left:0px;top:258px;white-space:nowrap;width:33px;text-align:center;font-family:'Liberation Mono', monospace;font-size:15px;line-height:17px;color:#444">5</div>
<div style="position:absolute;left:0px;top:305px;width:33px;height:1px;background:linear-gradient(to right,#e8e8e8,#d6d6d6)"></div>
<div style="position:absolute;left:0px;top:291px;white-space:nowrap;width:33px;text-align:center;font-family:'Liberation Mono', monospace;font-size:15px;line-height:17px;color:#444">6</div>
<div style="position:absolute;left:0px;top:338px;width:33px;height:1px;background:linear-gradient(to right,#e8e8e8,#d6d6d6)"></div>
<div style="position:absolute;left:0px;top:324px;white-space:nowrap;width:33px;text-align:center;font-family:'Liberation Mono', monospace;font-size:15px;line-height:17px;color:#444">7</div>
<div style="position:absolute;left:0px;top:371px;width:33px;height:1px;background:linear-gradient(to right,#e8e8e8,#d6d6d6)"></div>
<div style="position:absolute;left:0px;top:357px;white-space:nowrap;width:33px;text-align:center;font-family:'Liberation Mono', monospace;font-size:15px;line-height:17px;color:#444">8</div>
<div style="position:absolute;left:0px;top:404px;width:33px;height:1px;background:linear-gradient(to right,#e8e8e8,#d6d6d6)"></div>
<div style="position:absolute;left:0px;top:390px;white-space:nowrap;width:33px;text-align:center;font-family:'Liberation Mono', monospace;font-size:15px;line-height:17px;color:#444">9</div>
<div style="position:absolute;left:0px;top:437px;width:33px;height:1px;background:linear-gradient(to right,#e8e8e8,#d6d6d6)"></div>
<div style="position:absolute;left:0px;top:423px;white-space:nowrap;width:33px;text-align:center;font-family:'Liberation Mono', monospace;font-size:15px;line-height:17px;color:#444">10</div>
<div style="position:absolute;left:0px;top:455px;width:33px;height:1px;background:linear-gradient(to right,#e8e8e8,#d6d6d6)"></div>
<div style="position:absolute;left:0px;top:441px;white-space:nowrap;width:33px;text-align:center;font-family:'Liberation Mono', monospace;font-size:15px;line-height:17px;color:#444">11</div>
<div style="position:absolute;left:0px;top:473px;width:33px;height:1px;background:linear-gradient(to right,#e8e8e8,#d6d6d6)"></div>
<div style="position:absolute;left:0px;top:459px;white-space:nowrap;width:33px;text-align:center;font-family:'Liberation Mono', monospace;font-size:15px;line-height:17px;color:#444">12</div>
<div style="position:absolute;left:0px;top:491px;width:33px;height:1px;background:linear-gradient(to right,#e8e8e8,#d6d6d6)"></div>
<div style="position:absolute;left:0px;top:477px;white-space:nowrap;width:33px;text-align:center;font-family:'Liberation Mono', monospace;font-size:15px;line-height:17px;color:#444">13</div>
<div style="position:absolute;left:0px;top:510px;width:33px;height:1px;background:linear-gradient(to right,#e8e8e8,#d6d6d6)"></div>
<div style="position:absolute;left:0px;top:496px;white-space:nowrap;width:33px;text-align:center;font-family:'Liberation Mono', monospace;font-size:15px;line-height:17px;color:#444">14</div>
<div style="position:absolute;left:0px;top:543px;width:33px;height:1px;background:linear-gradient(to right,#e8e8e8,#d6d6d6)"></div>
<div style="position:absolute;left:0px;top:529px;white-space:nowrap;width:33px;text-align:center;font-family:'Liberation Mono', monospace;font-size:15px;line-height:17px;color:#444">15</div>
<div style="position:absolute;left:0px;top:576px;width:33px;height:1px;background:linear-gradient(to right,#e8e8e8,#d6d6d6)"></div>
<div style="position:absolute;left:0px;top:562px;white-space:nowrap;width:33px;text-align:center;font-family:'Liberation Mono', monospace;font-size:15px;line-height:17px;color:#444">16</div>
<div style="position:absolute;left:0px;top:609px;width:33px;height:1px;background:linear-gradient(to right,#e8e8e8,#d6d6d6)"></div>
<div style="position:absolute;left:0px;top:595px;white-space:nowrap;width:33px;text-align:center;font-family:'Liberation Mono', monospace;font-size:15px;line-height:17px;color:#444">17</div>
<div style="position:absolute;left:0px;top:642px;width:33px;height:1px;background:linear-gradient(to right,#e8e8e8,#d6d6d6)"></div>
<div style="position:absolute;left:0px;top:628px;white-space:nowrap;width:33px;text-align:center;font-family:'Liberation Mono', monospace;font-size:15px;line-height:17px;color:#444">18</div>
<div style="position:absolute;left:0px;top:675px;width:33px;height:1px;background:linear-gradient(to right,#e8e8e8,#d6d6d6)"></div>
<div style="position:absolute;left:0px;top:661px;white-space:nowrap;width:33px;text-align:center;font-family:'Liberation Mono', monospace;font-size:15px;line-height:17px;color:#444">19</div>
<div style="position:absolute;left:0px;top:708px;width:33px;height:1px;background:linear-gradient(to right,#e8e8e8,#d6d6d6)"></div>
<div style="position:absolute;left:0px;top:694px;white-space:nowrap;width:33px;text-align:center;font-family:'Liberation Mono', monospace;font-size:15px;line-height:17px;color:#444">20</div>
<div style="position:absolute;left:0px;top:726px;width:33px;height:1px;background:linear-gradient(to right,#e8e8e8,#d6d6d6)"></div>
<div style="position:absolute;left:0px;top:712px;white-space:nowrap;width:33px;text-align:center;font-family:'Liberation Mono', monospace;font-size:15px;line-height:17px;color:#444">21</div>
<div style="position:absolute;left:0px;top:744px;width:33px;height:1px;background:linear-gradient(to right,#e8e8e8,#d6d6d6)"></div>
<div style="position:absolute;left:0px;top:730px;white-space:nowrap;width:33px;text-align:center;font-family:'Liberation Mono', monospace;font-size:15px;line-height:17px;color:#444">22</div>
<div style="position:absolute;left:0px;top:762px;width:33px;height:1px;background:linear-gradient(to right,#e8e8e8,#d6d6d6)"></div>
<div style="position:absolute;left:0px;top:748px;white-space:nowrap;width:33px;text-align:center;font-family:'Liberation Mono', monospace;font-size:15px;line-height:17px;color:#444">23</div>
<div style="position:absolute;left:0px;top:781px;width:33px;height:1px;background:linear-gradient(to right,#e8e8e8,#d6d6d6)"></div>
<div style="position:absolute;left:0px;top:767px;white-space:nowrap;width:33px;text-align:center;font-family:'Liberation Mono', monospace;font-size:15px;line-height:17px;color:#444">24</div>
<div style="position:absolute;left:0px;top:814px;width:33px;height:1px;background:linear-gradient(to right,#e8e8e8,#d6d6d6)"></div>
<div style="position:absolute;left:104px;top:219px;width:40px;height:22px;border:2px solid #217346"></div>
<div style="position:absolute;left:106px;top:221px;width:36px;height:18px;border:1px solid #fff"></div>
<div style="position:absolute;left:140px;top:237px;width:6px;height:6px;background:#217346;border:1px solid #fff"></div>
<div style="position:absolute;left:1419px;top:125px;width:21px;height:674px;background:#fff"></div>
<div style="position:absolute;left:1422px;top:159px;width:15px;height:625px;background:#f0f0f0"></div>
<div style="position:absolute;left:1418px;top:142px;width:1px;height:657px;background:#ababab"></div>
<svg style="position:absolute;left:635px;top:165.5px" width="11" height="4"><polygon points="1.5,0 10.5,0 9.2,2.8 0,2.8" fill="#006767"/></svg>
<svg style="position:absolute;left:652px;top:165.5px" width="11" height="4"><polygon points="1.5,0 10.5,0 9.2,2.8 0,2.8" fill="#006767"/></svg>
<svg style="position:absolute;left:669px;top:165.5px" width="11" height="4"><polygon points="1.5,0 10.5,0 9.2,2.8 0,2.8" fill="#006767"/></svg>
<svg style="position:absolute;left:686px;top:165.5px" width="11" height="4"><polygon points="1.5,0 10.5,0 9.2,2.8 0,2.8" fill="#006767"/></svg>
<svg style="position:absolute;left:788px;top:165.5px" width="11" height="4"><polygon points="1.5,0 10.5,0 9.2,2.8 0,2.8" fill="#006767"/></svg>
<svg style="position:absolute;left:805px;top:165.5px" width="11" height="4"><polygon points="1.5,0 10.5,0 9.2,2.8 0,2.8" fill="#006767"/></svg>
<svg style="position:absolute;left:822px;top:165.5px" width="11" height="4"><polygon points="1.5,0 10.5,0 9.2,2.8 0,2.8" fill="#006767"/></svg>
<svg style="position:absolute;left:839px;top:165.5px" width="11" height="4"><polygon points="1.5,0 10.5,0 9.2,2.8 0,2.8" fill="#006767"/></svg>
<svg style="position:absolute;left:856px;top:165.5px" width="11" height="4"><polygon points="1.5,0 10.5,0 9.2,2.8 0,2.8" fill="#006767"/></svg>
<div style="position:absolute;left:703px;top:146px;width:40px;height:40px;line-height:40px;text-align:center;font-size:27px;font-weight:900;color:#006767;transform:skewX(-14deg) scale(0.92,1.12)">年</div>
<div style="position:absolute;left:736px;top:146px;width:40px;height:40px;line-height:40px;text-align:center;font-size:27px;font-weight:900;color:#006767;transform:skewX(-14deg) scale(0.92,1.12)">历</div>
<div style="position:absolute;left:865px;top:146px;width:40px;height:40px;line-height:40px;text-align:center;font-size:27px;font-weight:900;color:#006767;transform:skewX(-14deg) scale(0.92,1.12)">年</div>
<svg style="position:absolute;left:771px;top:153px" width="24" height="31"><polygon points="14,1 22.5,1 21,5 17.5,5 7.5,25 10.5,23 11.5,25.5 6,30 0.5,30 1.5,26.5" fill="#006767"/></svg>
<svg style="position:absolute;left:896px;top:153px" width="24" height="31"><polygon points="12,1.5 17,1 23,1 10,30 1,30 2.5,26.5 6.5,26.5 17,5 11,5" fill="#006767"/></svg>
<div style="position:absolute;left:980px;top:152px;white-space:nowrap;font-size:13px;line-height:18px;color:#000">年份选择</div>
<div style="position:absolute;left:1037px;top:150px;width:59px;height:25px;background:#fff;border:1px solid #a0a0a0;border-top-color:#7a7a7a;border-left-color:#7a7a7a"></div>
<div style="position:absolute;left:1072px;top:151px;width:23px;height:23px;background:#e3e3e3;border:1px solid #c9c9c9;border-right-color:#8a8a8a;border-bottom-color:#8a8a8a"></div>
<svg style="position:absolute;left:1077px;top:159px" width="13" height="8"><polygon points="0.5,0.5 11.5,0.5 6,6.5" fill="#000"/></svg>
<div style="position:absolute;left:1104px;top:150px;width:118px;height:26px;background:#efefef;border:1px solid #d8d8d8;border-right:2px solid #8c8c8c;border-bottom:2px solid #8c8c8c"></div>
<div style="position:absolute;left:1104px;top:152px;white-space:nowrap;width:116px;text-align:center;font-size:14.5px;line-height:20px;color:#000">清除日历数据</div>
<div style="position:absolute;left:1422px;top:127px;width:15px;height:15px;background:#fff;border:1px solid #ababab"></div>
<svg style="position:absolute;left:1425px;top:131px" width="9" height="6"><polygon points="0,5 8,5 4,1" fill="#777"/></svg>
<div style="position:absolute;left:1422px;top:142px;width:15px;height:17px;background:#fff;border:1px solid #ababab"></div>
<div style="position:absolute;left:1422px;top:784px;width:15px;height:16px;background:#fff;border:1px solid #ababab"></div>
<svg style="position:absolute;left:1425px;top:790px" width="9" height="6"><polygon points="0,0 8,0 4,4" fill="#777"/></svg>
<div style="position:absolute;left:1429px;top:628px;width:8px;height:60px;border-radius:4px;background:#9a9a9a;box-shadow:0 0 4px rgba(0,0,0,0.15)"></div>
<div style="position:absolute;left:1429px;top:676px;width:8px;height:12px;border-radius:0 0 4px 4px;background:#4cd070"></div>
<div style="position:absolute;left:0px;top:799px;width:1440px;height:28px;background:#f5f5f5"></div>
<div style="position:absolute;left:0px;top:799px;width:1440px;height:1px;background:#ababab"></div>
<div style="position:absolute;left:100px;top:799px;width:70px;height:25px;background:#fff;border-left:1px solid #ababab;border-right:1px solid #ababab"></div>
<div style="position:absolute;left:100px;top:822px;width:71px;height:2px;background:#217346"></div>
<div style="position:absolute;left:100px;top:803px;white-space:nowrap;width:70px;text-align:center;font-size:13px;line-height:18px;color:#217346">Sheet1</div>
<div style="position:absolute;left:170px;top:803px;white-space:nowrap;width:68px;text-align:center;font-size:13px;line-height:18px;color:#444">Sheet2</div>
<div style="position:absolute;left:239px;top:803px;white-space:nowrap;width:68px;text-align:center;font-size:13px;line-height:18px;color:#444">Sheet3</div>
<div style="position:absolute;left:239px;top:803px;width:1px;height:19px;background:#ababab"></div>
<div style="position:absolute;left:306px;top:803px;width:1px;height:19px;background:#ababab"></div>
<svg style="position:absolute;left:26px;top:807px" width="6" height="10"><polygon points="5,0 5,9 0,4.5" fill="#c0c0c0"/></svg>
<svg style="position:absolute;left:55px;top:807px" width="6" height="10"><polygon points="0,0 0,9 5,4.5" fill="#c0c0c0"/></svg>
<svg style="position:absolute;left:339px;top:804px" width="18" height="18"><circle cx="9" cy="9" r="7.3" fill="none" stroke="#777" stroke-width="1.3"/><path d="M9 5V13M5 9H13" stroke="#777" stroke-width="1.6"/></svg>
<svg style="position:absolute;left:863px;top:806px" width="4" height="14"><circle cx="2" cy="2" r="1" fill="#999"/><circle cx="2" cy="6.5" r="1" fill="#999"/><circle cx="2" cy="11" r="1" fill="#999"/></svg>
<div style="position:absolute;left:881px;top:806px;width:16px;height:15px;background:#fff;border:1px solid #ababab"></div>
<svg style="position:absolute;left:886px;top:809px" width="6" height="9"><polygon points="5,0 5,8 1,4" fill="#555"/></svg>
<div style="position:absolute;left:895px;top:806px;width:2px;height:15px;background:#ababab"></div>
<div style="position:absolute;left:896px;top:806px;width:492px;height:15px;background:#fff;border:1px solid #ababab;border-left:none"></div>
<div style="position:absolute;left:1388px;top:806px;width:16px;height:15px;background:#e6e6e6"></div>
<div style="position:absolute;left:1404px;top:806px;width:15px;height:15px;background:#fff;border:1px solid #ababab"></div>
<svg style="position:absolute;left:1409px;top:809px" width="6" height="9"><polygon points="1,0 1,8 5,4" fill="#555"/></svg>
<div style="position:absolute;left:0px;top:827px;width:1440px;height:33px;background:#217346"></div>
<div style="position:absolute;left:0px;top:860px;width:1440px;height:1px;background:#7d9bbd"></div>
<div style="position:absolute;left:13px;top:836px;white-space:nowrap;font-size:12px;line-height:16px;color:#fff">就绪</div>
<svg style="position:absolute;left:60px;top:830px" width="30" height="25" viewBox="60 830 30 25"><rect x="71.2" y="836.2" width="13.3" height="13.3" fill="none" stroke="#fff" stroke-width="1.2"/><rect x="76" y="836" width="9" height="4" fill="#fff"/><circle cx="73.5" cy="838.5" r="3.6" fill="#e0e0e0"/><path d="M73.5 842.5H83 M73.5 844.8H83 M73.5 847.1H83" stroke="#fff" stroke-width="1" stroke-dasharray="2 1.2"/></svg>
<div style="position:absolute;left:1107px;top:828px;width:46px;height:31px;background:#185c37"></div>
<svg style="position:absolute;left:1121px;top:836px" width="18" height="17"><path d="M1.5 1.5H16.5V15.5H1.5Z M6.5 1.5V15.5 M11.5 1.5V15.5 M1.5 6.5H16.5 M1.5 10.5H16.5" fill="none" stroke="#fff" stroke-width="1"/></svg>
<svg style="position:absolute;left:1166px;top:836px" width="18" height="17"><path d="M1.5 1.5H16.5V15.5H1.5Z" fill="none" stroke="#fff" stroke-width="1.1"/><path d="M4.5 3.5H13.5V13.5H4.5Z M6.5 6H11.5M6.5 8.5H11.5M6.5 11H11.5" fill="none" stroke="#fff" stroke-width="1"/></svg>
<svg style="position:absolute;left:1212px;top:836px" width="18" height="17"><path d="M1.5 1.5H16.5V15.5H1.5Z" fill="none" stroke="#fff" stroke-width="1.1"/><rect x="2" y="2" width="5" height="8" fill="#fff"/><rect x="8.5" y="2" width="3" height="8" fill="#fff"/></svg>
<div style="position:absolute;left:1250px;top:842px;width:6px;height:2px;background:#fff"></div>
<div style="position:absolute;left:1260px;top:842px;width:101px;height:1px;background:#fff"></div>
<div style="position:absolute;left:1307px;top:836px;width:5px;height:13px;background:#fff"></div>
<div style="position:absolute;left:1364px;top:842px;width:9px;height:2px;background:#fff"></div>
<div style="position:absolute;left:1367.5px;top:838px;width:2px;height:9px;background:#fff"></div>
<div style="position:absolute;left:1392px;top:835px;white-space:nowrap;font-size:13px;line-height:16px;color:#fff">100%</div>
<div style="position:absolute;left:0px;top:0px;width:1440px;height:125px;background:#fff"></div>
<svg style="position:absolute;left:0;top:0" width="1440" height="48"><g fill="none" stroke="#e6e6e6" stroke-width="4"><path d="M948 12 H1149 L1203 50"/><path d="M1013 31 H1111 L1138 50"/><path d="M1048 50 Q1058 41.5 1075 41.5 H1163 L1175 50"/><path d="M1309 50 L1336 22 H1440"/><path d="M1372 50 L1417 -2"/><path d="M1393 50 L1436 -2"/></g><g fill="none" stroke="#e6e6e6" stroke-width="7"><circle cx="1221" cy="14" r="26.5"/><path d="M1208 27 L1232 4"/><path d="M1207 5 H1235 V24"/><circle cx="967" cy="38" r="17"/><path d="M975 46 L960 31"/><path d="M956 45 V30 H971"/></g><g fill="#fff" stroke="#e6e6e6" stroke-width="3.5"><circle cx="1125" cy="12" r="4.5"/><circle cx="1154" cy="41.5" r="4.5"/><circle cx="1013" cy="31" r="4.5"/><circle cx="948" cy="11" r="4.5"/></g></svg>
<div style="position:absolute;left:0px;top:44px;width:65px;height:30px;background:#217346"></div>
<div style="position:absolute;left:0px;top:51px;white-space:nowrap;width:65px;text-align:center;font-size:12px;line-height:16px;color:#fff">文件</div>
<div style="position:absolute;left:84px;top:52px;white-space:nowrap;font-size:12px;line-height:16px;color:#444">开始</div>
<div style="position:absolute;left:141px;top:52px;white-space:nowrap;font-size:12px;line-height:16px;color:#444">插入</div>
<div style="position:absolute;left:198px;top:52px;white-space:nowrap;font-size:12px;line-height:16px;color:#444">页面布局</div>
<div style="position:absolute;left:279px;top:52px;white-space:nowrap;font-size:12px;line-height:16px;color:#444">公式</div>
<div style="position:absolute;left:336px;top:52px;white-space:nowrap;font-size:12px;line-height:16px;color:#444">数据</div>
<div style="position:absolute;left:393px;top:52px;white-space:nowrap;font-size:12px;line-height:16px;color:#444">审阅</div>
<div style="position:absolute;left:450px;top:52px;white-space:nowrap;font-size:12px;line-height:16px;color:#444">视图</div>
<div style="position:absolute;left:507px;top:52px;white-space:nowrap;font-size:12px;line-height:16px;color:#444">开发工具</div>
<div style="position:absolute;left:825px;top:15px;white-space:nowrap;font-size:12.25px;line-height:16px;color:#444">用VBA技术实现带农历的万年历1.xlsm - Excel</div>
<div style="position:absolute;left:1260px;top:47px;white-space:nowrap;font-size:13px;line-height:16px;color:#444">649241724@qq.com</div>
<div style="position:absolute;left:5px;top:91px;width:102px;height:24px;border:1px solid #c6c6c6;background:#fff"></div>
<div style="position:absolute;left:11px;top:97px;white-space:nowrap;font-family:'Liberation Mono', monospace;font-size:15px;line-height:18px;color:#222">B4</div>
<div style="position:absolute;left:137px;top:91px;width:110px;height:24px;border:1px solid #c6c6c6;background:#fff"></div>
<div style="position:absolute;left:250px;top:91px;width:1185px;height:24px;border:1px solid #c6c6c6;background:#fff"></div>
<div style="position:absolute;left:265px;top:94px;white-space:nowrap;font-size:15px;line-height:18px;color:#222">日</div>
<svg style="position:absolute;left:0px;top:0px" width="90" height="35" viewBox="0 0 90 35"><rect x="27.5" y="11.8" width="6" height="13.4" rx="0.8" fill="#fff" stroke="#1d6b3f" stroke-width="1"/><path d="M28.5 14.5H32.2M28.5 16.5H32.2M28.5 18.5H32.2M28.5 20.5H32.2M28.5 22.5H32.2" stroke="#1d6b3f" stroke-width="1.1"/><polygon points="18,11.8 28,10.6 28,27 18,25.8" fill="#1d6b3f"/><path d="M20.6 15 L25.2 22.8 M25.2 15 L20.6 22.8" stroke="#fff" stroke-width="1.9"/><rect x="62" y="10.8" width="16" height="16.2" rx="1" fill="#7f4aa4"/><rect x="64" y="11.8" width="12.2" height="8" rx="0.8" fill="#fff"/><rect x="65.5" y="22" width="7.5" height="4" rx="0.6" fill="#fff"/><rect x="68" y="22" width="2" height="3" fill="#7f4aa4"/></svg>
<svg style="position:absolute;left:100px;top:0px" width="80" height="35" viewBox="100 0 80 35"><path d="M107.2 16.6 L111.6 12.1 H114.8 L111.8 15.1 H119 A5.9 5.9 0 0 1 119 26.9 H118 V23.4 H119 A2.4 2.4 0 0 0 119 18.6 H111.8 L114.8 21.2 H111.6 Z" fill="#b2b2b2"/><g transform="translate(278,0) scale(-1,1)"><path d="M107.2 16.6 L111.6 12.1 H114.8 L111.8 15.1 H119 A5.9 5.9 0 0 1 119 26.9 H118 V23.4 H119 A2.4 2.4 0 0 0 119 18.6 H111.8 L114.8 21.2 H111.6 Z" fill="#3d77b3"/></g></svg>
<svg style="position:absolute;left:200px;top:9px" width="17" height="20" viewBox="0 0 17 20"><path d="M1.5 1.5 H11 L15.5 6 V18.5 H1.5 Z M11 1.5 V6 H15.5" fill="#fff" stroke="#6d6d6d" stroke-width="1"/></svg>
<svg style="position:absolute;left:230px;top:0px" width="140" height="35" viewBox="230 0 140 35"><path d="M250 15.5 H245.7 V26.4 H262.4 V15.5 H256.5" fill="none" stroke="#6a6a6a" stroke-width="1.1"/><path d="M249.2 17 V11.5 A2.6 2.6 0 0 1 254.4 11.5 V18.3 A1.6 1.6 0 0 1 251.2 18.3 V12.5" fill="none" stroke="#6a6a6a" stroke-width="1.1"/><rect x="259.2" y="17" width="1.8" height="3" fill="#3b79b8"/><path d="M250.3 22.8H256" stroke="#9a9a9a" stroke-width="0.9"/><path d="M296.5 15.5 V10.5 H300" fill="none" stroke="#6a6a6a" stroke-width="1.1"/><path d="M297.7 15 V12.2" stroke="#3b79b8" stroke-width="1"/><path d="M293 14.2 H302 V18 H308.8 V20.5 Q308.8 22.5 306.8 22.5 H293 Q291 22.5 291 20.5 V16.2 Q291 14.2 293 14.2 Z" fill="#6a6a6a"/><rect x="296.3" y="20.3" width="7.6" height="6.3" fill="#fff" stroke="#6a6a6a" stroke-width="1"/><path d="M297.8 22.6H302.4M297.8 24.6H302.4" stroke="#3b79b8" stroke-width="0.9"/><circle cx="305" cy="13.8" r="5.2" fill="#5a9e80"/><path d="M302.4 13.8 L304.4 15.8 L307.8 12" stroke="#fff" stroke-width="1.5" fill="none"/><path d="M342.5 27.2 H337.5 V10.7 H347.5 L351.2 14.5 V16.5 M347.5 10.7 V14.5 H351.2" fill="none" stroke="#6a6a6a" stroke-width="1.1"/><circle cx="347.3" cy="20.6" r="4.2" fill="#fff" stroke="#6a6a6a" stroke-width="1.3"/><path d="M350.3 23.6 L354.6 27.6" stroke="#6a6a6a" stroke-width="1.9"/></svg>
<div style="position:absolute;left:382px;top:8px;white-space:nowrap;font-family:'Liberation Sans',sans-serif;font-size:8px;line-height:9px;color:#555;letter-spacing:0.3px">ABC</div>
<svg style="position:absolute;left:383px;top:17px" width="18" height="12" viewBox="0 0 18 12"><path d="M1.5 5 L6.5 10 L16 1.5" fill="none" stroke="#3b79b8" stroke-width="3"/></svg>
<div style="position:absolute;left:430px;top:9px;white-space:nowrap;font-family:'Liberation Sans',sans-serif;font-size:11px;line-height:10px;color:#3b79b8">A</div>
<div style="position:absolute;left:431px;top:18px;white-space:nowrap;font-family:'Liberation Sans',sans-serif;font-size:11px;line-height:10px;color:#8051a8">Z</div>
<svg style="position:absolute;left:440px;top:9px" width="9" height="20" viewBox="0 0 9 20"><path d="M4.5 1 V18 M1 14 L4.5 18 L8 14" fill="none" stroke="#777" stroke-width="1.1"/></svg>
<div style="position:absolute;left:477px;top:9px;white-space:nowrap;font-family:'Liberation Sans',sans-serif;font-size:11px;line-height:10px;color:#8051a8">Z</div>
<div style="position:absolute;left:476px;top:18px;white-space:nowrap;font-family:'Liberation Sans',sans-serif;font-size:11px;line-height:10px;color:#3b79b8">A</div>
<svg style="position:absolute;left:486px;top:9px" width="9" height="20" viewBox="0 0 9 20"><path d="M4.5 1 V18 M1 14 L4.5 18 L8 14" fill="none" stroke="#777" stroke-width="1.1"/></svg>
<svg style="position:absolute;left:515px;top:0px" width="125" height="35" viewBox="515 0 125 35"><path d="M525.6 15.2 A3.6 3.6 0 1 1 532.2 15.2" fill="none" stroke="#9abbe0" stroke-width="2.2"/><path d="M528.2 13.2 Q528.2 12.3 529.2 12.3 Q530.2 12.3 530.2 13.2 V19.5 L535 21 Q536 21.3 536 22.5 V27 H526.5 L523.2 21.8 Q523 21 523.8 20.8 L528.2 21.6 Z" fill="#6a6a6a"/><polygon points="541.5,17.5 547.5,17.5 544.5,20.5" fill="#333"/><path d="M568 25.5 V14 H575.5 L577 12.5 H582.5 V17.5" fill="none" stroke="#e8bf78" stroke-width="1.1"/><polygon points="570.5,18 585,18 582,26 567.5,26" fill="#e8bf78"/><path d="M613 14 H622 L623.8 11.6 H631 V26.8 H613 Z" fill="#e8bf78"/><path d="M623.4 14 L624.5 12.6 H629.8 V14 Z" fill="#fff"/><polygon points="621.8,16.6 623,19.8 626.3,19.9 623.7,22 624.6,25.2 621.8,23.4 619,25.2 619.9,22 617.3,19.9 620.6,19.8" fill="#fff"/></svg>
<svg style="position:absolute;left:666px;top:15px" width="8" height="9" viewBox="0 0 8 9"><path d="M1 1.5H7" stroke="#555"/><polygon points="1,4 7,4 4,7.5" fill="#555"/></svg>
<div style="position:absolute;left:1228px;top:10px;white-space:nowrap;font-family:'Liberation Sans',sans-serif;font-size:16px;line-height:18px;color:#6a6a6a;font-weight:bold">?</div>
<svg style="position:absolute;left:1270px;top:12px" width="18" height="14" viewBox="0 0 18 14"><rect x="0.5" y="0.5" width="16" height="12" fill="none" stroke="#666"/><path d="M1 3H16" stroke="#666"/><path d="M8.5 12V5 M5.5 8 L8.5 5 L11.5 8" fill="none" stroke="#666" stroke-width="1.6"/></svg>
<svg style="position:absolute;left:1319px;top:21px" width="15" height="3" viewBox="0 0 15 3"><rect x="0" y="0" width="13" height="2" fill="#666"/></svg>
<svg style="position:absolute;left:1365px;top:12px" width="15" height="14" viewBox="0 0 15 14"><rect x="0.5" y="5.5" width="8" height="7" fill="none" stroke="#666" stroke-width="1.2"/><path d="M3.5 5.5 V2.5 H11.5 V9.5 H8.5" fill="none" stroke="#666" stroke-width="1.2"/></svg>
<svg style="position:absolute;left:1410px;top:12px" width="15" height="14" viewBox="0 0 15 14"><path d="M1 1 L13 13 M13 1 L1 13" stroke="#666" stroke-width="1.8"/></svg>
<svg style="position:absolute;left:1386px;top:53px" width="7" height="4" viewBox="0 0 7 4"><polygon points="0,0 6,0 3,3" fill="#777"/></svg>
<svg style="position:absolute;left:1398px;top:44px" width="25" height="25" viewBox="0 0 25 25"><rect x="0" y="0" width="24" height="24" fill="#b1b1b1"/><circle cx="12" cy="9" r="5.5" fill="#fff"/><path d="M2 24 A10 9 0 0 1 22 24 Z" fill="#fff"/></svg>
<svg style="position:absolute;left:91px;top:100px" width="10" height="6" viewBox="0 0 10 6"><polygon points="0,0 9,0 4.5,4.5" fill="#6a6a6a"/></svg>
<div style="position:absolute;left:121px;top:98px;width:2px;height:2px;background:#999"></div>
<div style="position:absolute;left:121px;top:102px;width:2px;height:2px;background:#999"></div>
<div style="position:absolute;left:121px;top:106px;width:2px;height:2px;background:#999"></div>
<svg style="position:absolute;left:149px;top:97px" width="13" height="13" viewBox="0 0 13 13"><path d="M1.5 1.5 L11 11 M11 1.5 L1.5 11" stroke="#c6c6c6" stroke-width="1.6"/></svg>
<svg style="position:absolute;left:184px;top:96px" width="16" height="14" viewBox="0 0 16 14"><path d="M1.5 7.5 L5.5 11.5 L14 2.5" fill="none" stroke="#c6c6c6" stroke-width="2"/></svg>
<div style="position:absolute;left:223px;top:94px;white-space:nowrap;font-family:'Liberation Serif',serif;font-size:15px;line-height:16px;color:#555;font-weight:bold"><i>f</i><span style="font-size:10px;font-style:italic">x</span></div>
<svg style="position:absolute;left:1422px;top:100px" width="10" height="8" viewBox="0 0 10 8"><path d="M1.2 1.5 L4.5 4.8 L7.8 1.5" fill="none" stroke="#555" stroke-width="1.8"/></svg>
</body></html>
